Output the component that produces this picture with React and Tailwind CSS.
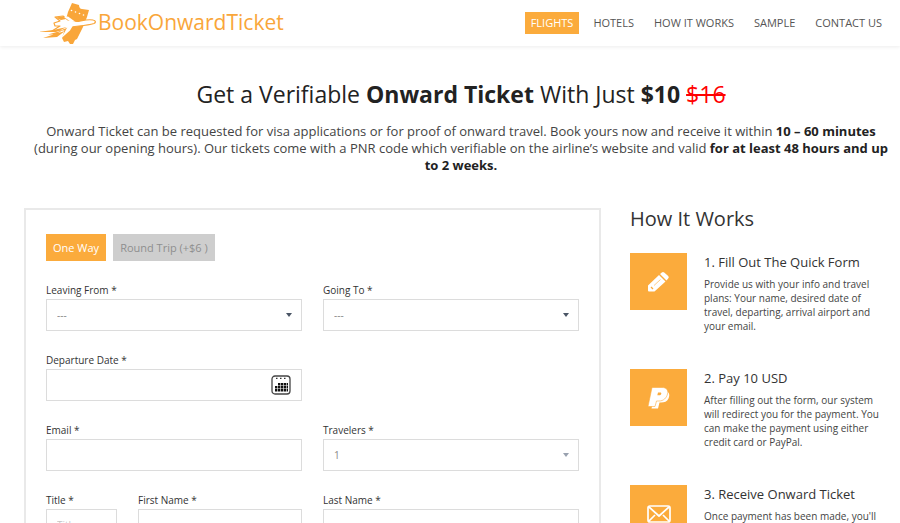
import React, { useState } from "react";

const navItems = ["Flights", "Hotels", "How it works", "Sample", "Contact us"];

const inputClass =
  "block h-8 w-full border border-[#dcdcdc] bg-white px-2.5 text-[10px] text-[#888] outline-none";

const Logo = () => (
  <svg viewBox="0 0 56 44" className="h-11 w-14 shrink-0" aria-hidden="true">
    <path
      fill="#f9a63a"
      d="M32 2l7 2c0 2 1 4 3 4l7 1-2 7-4 10-6 12-2 1-2 4-3 0-2-3-4 1-2-4 2-6 1-9 3-11z"
    />
    <g fill="#fff">
      <circle cx="31.500" cy="9.500" r=".8" />
      <circle cx="35.500" cy="11" r=".8" />
      <circle cx="39.500" cy="12.500" r=".8" />
      <circle cx="43.500" cy="14" r=".8" />
    </g>
    {/* fuselage and tail */}
    <path
      fill="#fff"
      stroke="#f9a63a"
      strokeWidth="1.200"
      strokeLinejoin="round"
      d="M12 30l8-5-5 0-1-3 6-2-5-4 8-1 5 4 9 1.500c6-1 11-2.500 16-1.500 3 .5 3 2.500 1 3.500-5 1.500-10 2-15 2.500l-8 1-8 3z"
    />
    <path fill="#f9a63a" d="M15 16.500l8-1 3 2.500-5 1z" />
    {/* wings */}
    <path fill="#fff" d="M28 25l5-.5-3 5-9 8 4-7z" />
    <path fill="#fff" d="M24 16l4-.5 7 5-4 .5z" />
    {/* speed lines */}
    <path fill="#f9a63a" d="M-1 31l14-2 14-3-11 5zM3 37l9-3 13-4-8 6zM8 33.500l14-4-6 4z" />
  </svg>
);

const CalendarIcon = () => (
  <svg viewBox="0 0 20 20" className="h-5 w-5" aria-hidden="true">
    <rect x="1" y="1" width="18" height="18" rx="3" fill="#fff" stroke="#444" strokeWidth="1.3" />
    <path stroke="#333" strokeWidth="1.3" strokeDasharray="1.5 2.5" d="M5 3.3h11" />
    <g stroke="#111" strokeWidth="2.4" strokeDasharray="2.4 .6">
      <path d="M7 9.2h10" />
      <path d="M4 12.2h13" />
      <path d="M4 15.2h13" />
    </g>
  </svg>
);

const PencilIcon = () => (
  <svg viewBox="0 0 22 22" className="h-[22px] w-[22px]" aria-hidden="true">
    <path
      fill="#fff"
      d="M0 14.500L11 4l6.500 6.500L6.500 20.500H1q-1 0-1-1zM12 3l1.800-1.500q1.200-1 2.400 0l4 3.500q1.200 1.200 0 2.400L18.500 9.500z"
    />
    <path stroke="#fbab3c" strokeWidth=".6" d="M6 14.500L12.500 8.500" />
    <path stroke="#fbab3c" strokeWidth="1.200" d="M3 16l2 2" />
  </svg>
);

const PaypalIcon = () => (
  <svg viewBox="0 0 22 22" className="h-[22px] w-[22px]" aria-hidden="true">
    <path
      fill="#fff"
      d="M8 4h10c3.500 1 4 4.500 2.500 7.500-1.500 3-4 4-7.500 4h-1.500l-1.500 6H3.500z"
    />
    <path
      fill="#fff"
      stroke="#fbab3c"
      strokeWidth=".6"
      strokeLinejoin="round"
      d="M4 .5h10c4.500 0 6.500 2.500 5.500 6.500s-4 7-8.500 7H8.500L7 19.500H0z"
    />
    <path fill="#fbab3c" d="M10 5.500h2c1.300 0 1.500.6 1.200 1.400S12.300 8.300 11 8.300H9.300z" />
  </svg>
);

const MailIcon = () => (
  <svg viewBox="0 0 24 20" className="h-5 w-6" aria-hidden="true">
    <g fill="none" stroke="#fff" strokeWidth="1.7" strokeLinejoin="round">
      <rect x="1" y="2" width="22" height="16" rx="2" />
      <path d="M2 3l10 9 10-9M2 17l6-6M22 17l-6-6" />
    </g>
  </svg>
);

const steps = [
  {
    title: "1. Fill Out The Quick Form",
    text: "Provide us with your info and travel plans: Your name, desired date of travel, departing, arrival airport and your email.",
    icon: <PencilIcon />,
  },
  {
    title: "2. Pay 10 USD",
    text: "After filling out the form, our system will redirect you for the payment. You can make the payment using either credit card or PayPal.",
    icon: <PaypalIcon />,
  },
  {
    title: "3. Receive Onward Ticket",
    text: "Once payment has been made, you'll",
    icon: <MailIcon />,
  },
];

const Field = ({ id, label, className, children }) => (
  <div className={className}>
    <label htmlFor={id} className="block pb-px text-[10px] leading-4 text-[#333]">
      {label} *
    </label>
    <div className="relative">{children}</div>
  </div>
);

const Select = ({ id, options, arrowClass = "text-gray-600" }) => (
  <>
    <select id={id} className={`${inputClass} appearance-none`}>
      {options.map((option) => (
        <option key={option}>{option}</option>
      ))}
    </select>
    <svg
      viewBox="0 0 6 4"
      className={`pointer-events-none absolute right-2.5 top-3.5 h-1 w-1.5 ${arrowClass}`}
      aria-hidden="true"
    >
      <path fill="currentColor" d="M0 0h6L3 4z" />
    </svg>
  </>
);

const App = () => {
  const [tripType, setTripType] = useState("oneWay");

  const tripClass = (type) =>
    tripType === type ? "bg-[#fbab3c] text-white" : "bg-[#cecece] text-[#8f8f8f]";

  return (
    <div className="h-screen overflow-hidden bg-white font-['Open_Sans',sans-serif] text-[#333]">
      {/* Header */}
      <header className="flex h-[46px] items-center justify-between pl-10 pr-3 shadow-[0_1px_4px_rgba(0,0,0,0.08)]">
        <a href="#" className="flex items-center gap-0.5 text-[21px] text-[#f9a63a]">
          <Logo />
          BookOnwardTicket
        </a>
        <nav className="flex gap-2">
          {navItems.map((item, index) => (
            <a
              key={item}
              href="#"
              className={`px-1.5 text-[11px] leading-[22px] uppercase ${
                index === 0 ? "bg-[#fbab3c] text-white" : "text-[#555]"
              }`}
            >
              {item}
            </a>
          ))}
        </nav>
      </header>

      {/* Intro */}
      <section className="pt-8 pr-2 pl-[30px] text-center">
        <h1 className="text-[23px] leading-8 text-[#222]">
          Get a Verifiable <b>Onward Ticket</b> With Just <b>$10</b>{" "}
          <s className="text-[#f00]">$16</s>
        </h1>
        <p className="mt-[13px] text-[13px] leading-[17px] text-[#444]">
          Onward Ticket can be requested for visa applications or for proof of onward travel. Book
          yours now and receive it within <b className="text-[#222]">10 – 60 minutes</b> (during our
          opening hours). Our tickets come with a PNR code which verifiable on the airline’s website
          and valid <b className="text-[#222]">for at least 48 hours and up to 2 weeks.</b>
        </p>
      </section>

      <main className="grid grid-cols-[577fr_250fr] gap-[29px] pt-[34px] pr-5 pl-6">
        {/* Booking form */}
        <form className="border-2 border-[#e9e9e9] px-5 pt-6 pb-8">
          <div className="flex gap-[7px] text-[11px] leading-[27px]">
            <button
              type="button"
              onClick={() => setTripType("oneWay")}
              className={`px-[7px] ${tripClass("oneWay")}`}
            >
              One Way
            </button>
            <button
              type="button"
              onClick={() => setTripType("roundTrip")}
              className={`px-[7px] ${tripClass("roundTrip")}`}
            >
              Round Trip (+$6 )
            </button>
          </div>

          <div className="mt-[21px] grid grid-cols-[71fr_164fr_256fr] gap-[21px]">
            <Field id="from" label="Leaving From" className="col-span-2">
              <Select id="from" options={["---"]} />
            </Field>
            <Field id="to" label="Going To">
              <Select id="to" options={["---"]} />
            </Field>
            <Field id="departure" label="Departure Date" className="col-span-2">
              <input id="departure" type="text" className={inputClass} />
              <span className="pointer-events-none absolute top-1.5 right-[11px]">
                <CalendarIcon />
              </span>
            </Field>
            <Field id="email" label="Email" className="col-span-2 col-start-1">
              <input id="email" type="email" className={inputClass} />
            </Field>
            <Field id="travelers" label="Travelers">
              <Select id="travelers" options={["1", "2", "3", "4"]} arrowClass="text-gray-400" />
            </Field>
            <Field id="title" label="Title">
              <input id="title" type="text" placeholder="Title" className={inputClass} />
            </Field>
            <Field id="firstName" label="First Name">
              <input id="firstName" type="text" className={inputClass} />
            </Field>
            <Field id="lastName" label="Last Name">
              <input id="lastName" type="text" className={inputClass} />
            </Field>
          </div>
        </form>

        {/* How it works */}
        <aside>
          <h2 className="text-xl leading-[22px] text-[#333]">How It Works</h2>
          <div className="mt-[23px] grid auto-rows-[87px] gap-[29px]">
            {steps.map((step) => (
              <div key={step.title} className="flex gap-[17px]">
                <div className="flex h-[57px] w-[57px] shrink-0 items-center justify-center bg-[#fbab3c]">
                  {step.icon}
                </div>
                <div>
                  <h3 className="text-[13px] leading-[18px] text-[#333]">{step.title}</h3>
                  <p className="mt-1.5 text-[10px] leading-[14px] text-[#444]">{step.text}</p>
                </div>
              </div>
            ))}
          </div>
        </aside>
      </main>
    </div>
  );
};

export default App;
